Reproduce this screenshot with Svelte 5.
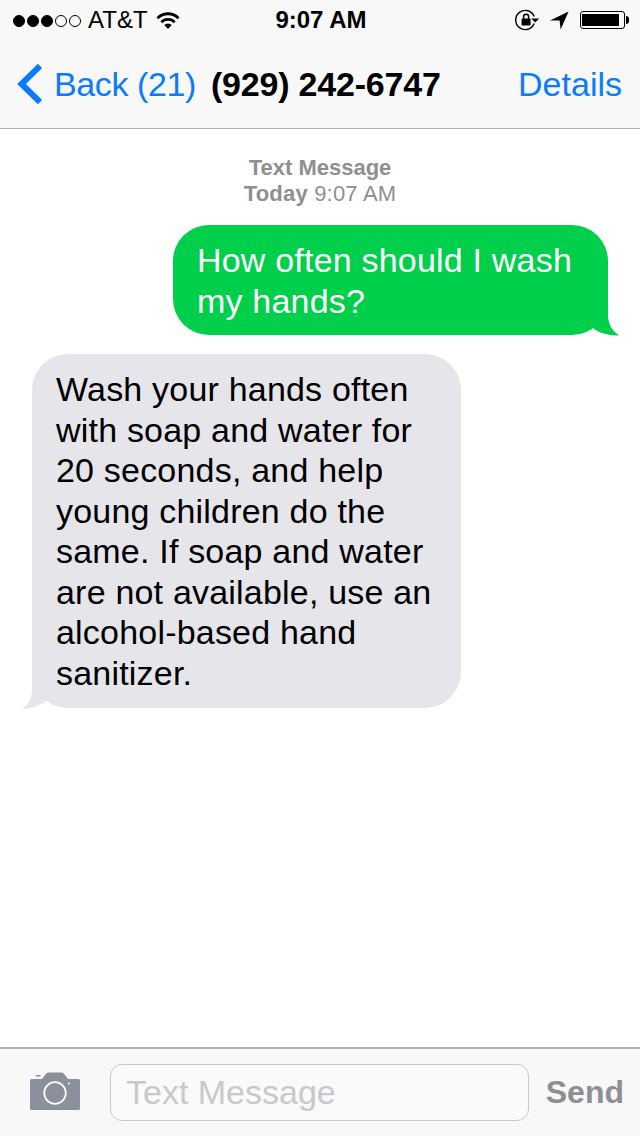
<script>
  const signal = [1, 1, 1, 0, 0];
</script>

<div class="phone">
  <header class="top">
    <div class="status">
      <div class="status-left">
        <div class="dots">
          {#each signal as on}
            <span class="dot" class:on></span>
          {/each}
        </div>
        <span class="carrier">AT&amp;T</span>
        <svg class="wifi" width="24" height="18" viewBox="0 0 24 18">
          <path d="M0.5 6.2 A16 16 0 0 1 23.5 6.2 L21.6 8.2 A13.4 13.4 0 0 0 2.4 8.2 Z" />
          <path d="M4.4 10.2 A10.6 10.6 0 0 1 19.6 10.2 L17.7 12.2 A8 8 0 0 0 6.3 12.2 Z" />
          <path d="M8.2 14 A5.4 5.4 0 0 1 15.8 14 L12 18 Z" />
        </svg>
      </div>
      <div class="clock">9:07 AM</div>
      <div class="status-right">
        <svg class="lock" width="25" height="22" viewBox="0 0 25 22">
          <path d="M19.2 14.6 A9.6 9.6 0 1 1 19.2 7.4" fill="none" stroke="#000" stroke-width="1.4" />
          <path d="M16.2 9.4 L24.2 9.4 L20.2 13.6 Z" />
          <rect x="6.6" y="9.6" width="9" height="7" rx="0.8" />
          <path d="M8.6 10 V7.8 A2.5 2.5 0 0 1 13.6 7.8 V10" fill="none" stroke="#000" stroke-width="1.5" />
        </svg>
        <svg class="arrow" width="19" height="19" viewBox="0 0 19 19">
          <path d="M0 9.4 L18.6 0.6 L10.6 18.6 L9.6 9.6 Z" />
        </svg>
        <div class="battery"><span class="level"></span></div>
        <span class="nub"></span>
      </div>
    </div>
    <nav class="nav">
      <div class="back">
        <svg width="27" height="42" viewBox="0 0 27 42">
          <path d="M25 3 L6.500 21 L25 39" fill="none" stroke="#0a7aff" stroke-width="6" />
        </svg>
        <span>Back (21)</span>
      </div>
      <div class="title">(929) 242-6747</div>
      <div class="details">Details</div>
    </nav>
  </header>

  <main class="thread">
    <div class="stamp">
      <div><b>Text Message</b></div>
      <div class="when"><b>Today</b> 9:07 AM</div>
    </div>

    <div class="bubble sent">
      How often should I wash my hands?
      <svg class="tail" width="28" height="39" viewBox="0 0 28 39">
        <path d="M16 0 V18 C16 26 20 35 27.500 38.300 C20 38.800 9 37 2 32 L0 28 Z" fill="#00cf4c" />
      </svg>
    </div>

    <div class="bubble received">
      Wash your hands often with soap and water for 20 seconds, and help young children do the same. If soap and water are not available, use an alcohol-based hand sanitizer.
      <svg class="tail" width="28" height="39" viewBox="0 0 28 39">
        <path d="M11 0 V20 C11 28 7 36 0.500 38.700 C8 39 17 36.500 24 32 L28 27 Z" fill="#e5e5ea" />
      </svg>
    </div>
  </main>

  <footer class="composer">
    <svg class="camera" width="50" height="38" viewBox="0 0 50 38">
      <path fill="#8a919d" d="M1.500 7 H12 L16 1.800 Q17 0.500 19 0.500 H31 Q33 0.500 34 1.800 L38 7 H48.500 Q50 7 50 8.500 V36.500 Q50 38 48.500 38 H1.500 Q0 38 0 36.500 V8.500 Q0 7 1.500 7 Z" />
      <circle cx="25" cy="21" r="10.800" fill="none" stroke="#fff" stroke-width="1.700" />
      <rect x="6" y="3" width="4.500" height="1.500" fill="#8a919d" />
      <circle cx="39" cy="11.500" r="1" fill="#fff" />
    </svg>
    <div class="field">Text Message</div>
    <div class="send">Send</div>
  </footer>
</div>

<style>
  :global(body) {
    background: #fff;
  }
  .phone {
    width: 640px;
    height: 1136px;
    display: flex;
    flex-direction: column;
    font-family: "Liberation Sans", Arial, sans-serif;
    color: #000;
    overflow: hidden;
  }

  .top {
    background: #f8f8f8;
    border-bottom: 1px solid #b2b2b2;
    height: 128px;
    flex: none;
  }
  .status {
    height: 40px;
    display: grid;
    grid-template-columns: 1fr auto 1fr;
    align-items: center;
    padding: 0 11px 0 13px;
  }
  .status-left {
    display: flex;
    align-items: center;
  }
  .dots {
    display: flex;
    gap: 2px;
  }
  .dot {
    width: 10px;
    height: 10px;
    border: 1px solid #000;
    border-radius: 50%;
    margin-top: 1px;
  }
  .dot.on {
    background: #000;
  }
  .carrier {
    font-size: 24px;
    margin-left: 7px;
    line-height: 40px;
  }
  .wifi {
    margin-left: 8px;
    margin-top: -1px;
  }
  .clock {
    font-size: 24px;
    font-weight: 700;
    line-height: 40px;
  }
  .status-right {
    display: flex;
    align-items: center;
    justify-content: flex-end;
  }
  .lock {
    margin-right: 10px;
  }
  .arrow {
    margin-right: 11px;
  }
  .battery {
    width: 37px;
    height: 12px;
    border: 1px solid #000;
    border-radius: 3px;
    padding: 2px 5px 2px 1px;
    display: flex;
  }
  .level {
    flex: 1;
    background: #000;
  }
  .nub {
    width: 3px;
    height: 8px;
    background: #000;
    border-radius: 0 3px 3px 0;
    margin-left: 1px;
  }

  .nav {
    height: 88px;
    display: flex;
    align-items: center;
    padding: 0 18px 0 15px;
    font-size: 34px;
  }
  .back {
    display: flex;
    align-items: center;
    color: #0a7aff;
  }
  .back span {
    margin-left: 12px;
    letter-spacing: -0.4px;
  }
  .title {
    font-weight: 700;
    margin-left: 15px;
    letter-spacing: -0.2px;
  }
  .details {
    color: #0a7aff;
    margin-left: auto;
  }

  .thread {
    flex: 1;
    display: flex;
    flex-direction: column;
    padding: 26px 32px 0;
  }
  .stamp {
    text-align: center;
    color: #8e8e93;
    font-size: 22px;
    line-height: 26px;
    margin-bottom: 18px;
  }
  .when {
    letter-spacing: 0.2px;
  }
  .bubble {
    position: relative;
    box-sizing: border-box;
    font-size: 34px;
    line-height: 40.5px;
    border-radius: 36px;
    letter-spacing: 0.2px;
  }
  .sent {
    align-self: flex-end;
    width: 435px;
    height: 110px;
    padding: 15px 24px 0 24px;
    background: #00cf4c;
    color: #fff;
  }
  .sent .tail {
    position: absolute;
    right: -12px;
    bottom: -1px;
  }
  .received {
    align-self: flex-start;
    width: 429px;
    height: 354px;
    margin-top: 19px;
    padding: 15px 24px 0 24px;
    background: #e5e5ea;
  }
  .received .tail {
    position: absolute;
    left: -11px;
    bottom: -1px;
  }

  .composer {
    flex: none;
    height: 89px;
    box-sizing: border-box;
    border-top: 2px solid #b2b2b2;
    background: #f8f8f8;
    display: flex;
    align-items: center;
    padding: 0 16px 0 30px;
  }
  .camera {
    flex: none;
    margin-top: -3px;
  }
  .field {
    width: 419px;
    height: 57px;
    box-sizing: border-box;
    margin-left: 30px;
    padding-left: 15px;
    background: #fafafa;
    border: 1px solid #c8c8cd;
    border-radius: 12px;
    color: #c8c8cd;
    font-size: 34px;
    line-height: 55px;
  }
  .send {
    margin-left: auto;
    font-size: 32px;
    font-weight: 700;
    color: #8e8e93;
  }
</style>
